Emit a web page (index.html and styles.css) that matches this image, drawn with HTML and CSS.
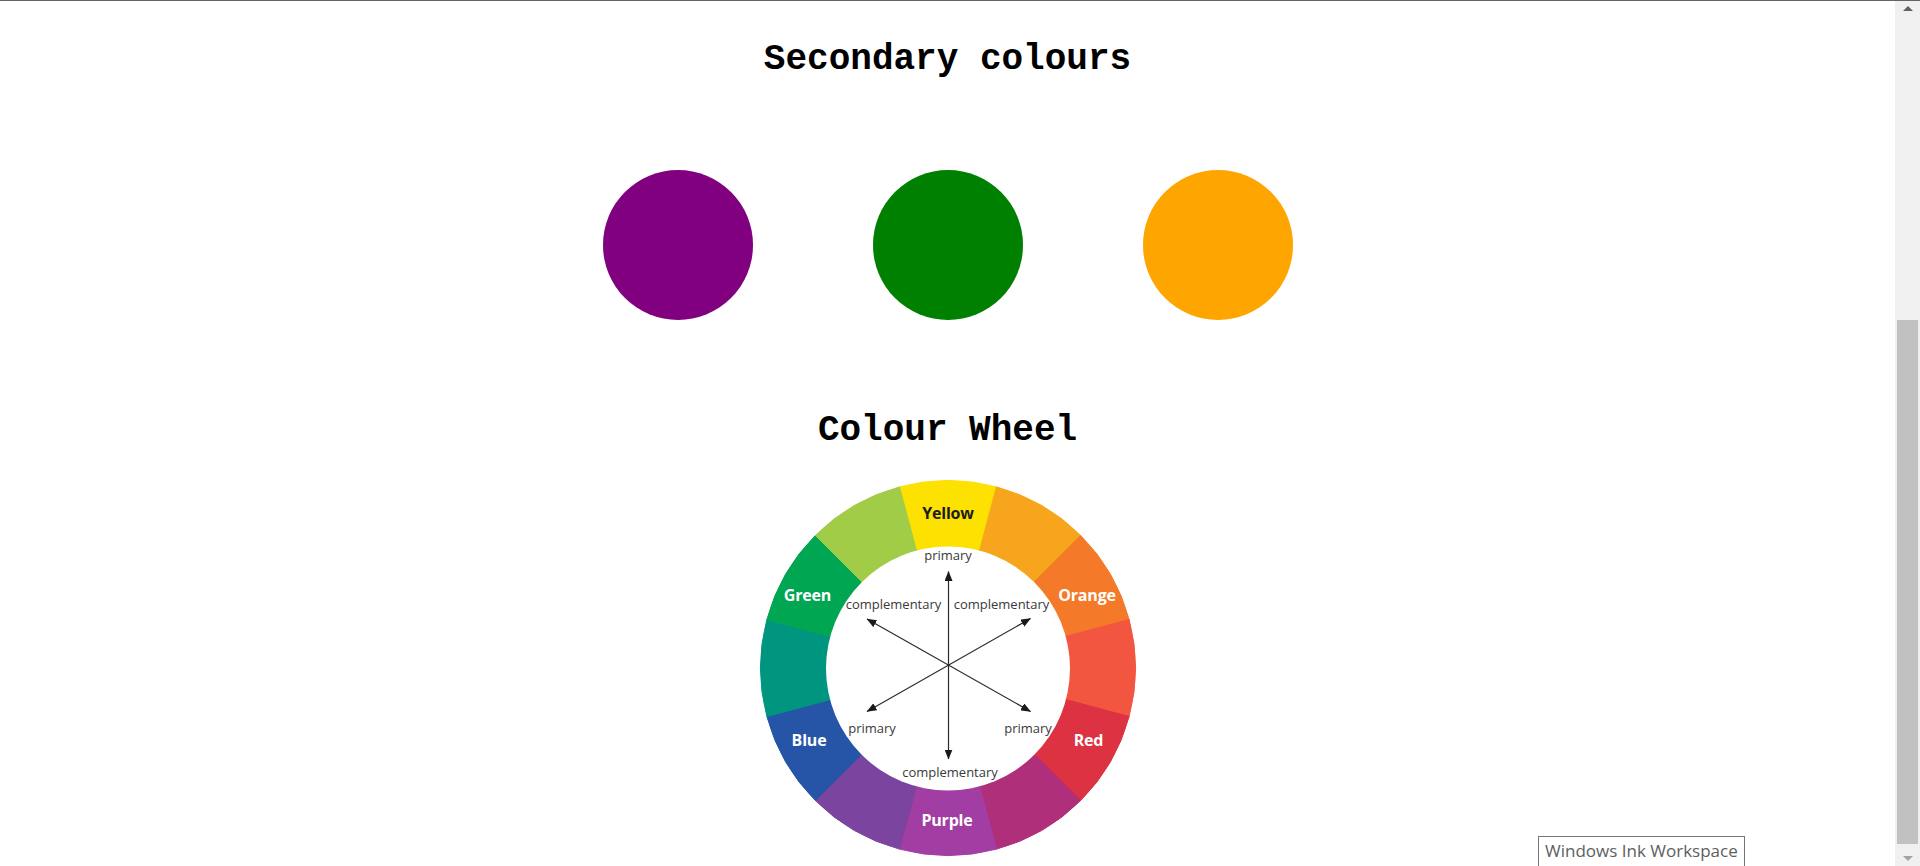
FILE: index.html
```html
<!DOCTYPE html>
<html lang="en">
<head>
<meta charset="utf-8">
<title>Colours</title>
<link rel="stylesheet" href="styles.css">
</head>
<body>
<div class="window">
  <main class="page">
    <h1 class="title">Secondary colours</h1>
    <div class="swatches">
      <div class="swatch purple"></div>
      <div class="swatch green"></div>
      <div class="swatch orange"></div>
    </div>
    <h2 class="title wheel-title">Colour Wheel</h2>
    <svg class="wheel" width="400" height="400" viewBox="0 0 400 400" xmlns="http://www.w3.org/2000/svg">
      <defs>
        <marker id="ah" viewBox="0 0 10 8" refX="9.5" refY="4" markerWidth="10" markerHeight="8" markerUnits="userSpaceOnUse" orient="auto-start-reverse">
          <path d="M0,0 L10,4 L0,8 z" fill="#1a1a1a"/>
        </marker>
      </defs>
      <g class="segments">
        <path fill="#fde100" stroke="#fde100" d="M200,200 L151.472,18.889 A187.5,187.5 0 0 1 248.528,18.889 Z"/>
        <path fill="#f7a51d" stroke="#f7a51d" d="M200,200 L248.528,18.889 A187.5,187.5 0 0 1 332.583,67.417 Z"/>
        <path fill="#f47a2a" stroke="#f47a2a" d="M200,200 L332.583,67.417 A187.5,187.5 0 0 1 381.111,151.472 Z"/>
        <path fill="#f25540" stroke="#f25540" d="M200,200 L381.111,151.472 A187.5,187.5 0 0 1 381.111,248.528 Z"/>
        <path fill="#dc3242" stroke="#dc3242" d="M200,200 L381.111,248.528 A187.5,187.5 0 0 1 332.583,332.583 Z"/>
        <path fill="#b02f7a" stroke="#b02f7a" d="M200,200 L332.583,332.583 A187.5,187.5 0 0 1 248.528,381.111 Z"/>
        <path fill="#a13da3" stroke="#a13da3" d="M200,200 L248.528,381.111 A187.5,187.5 0 0 1 151.472,381.111 Z"/>
        <path fill="#7a449f" stroke="#7a449f" d="M200,200 L151.472,381.111 A187.5,187.5 0 0 1 67.417,332.583 Z"/>
        <path fill="#2655a8" stroke="#2655a8" d="M200,200 L67.417,332.583 A187.5,187.5 0 0 1 18.889,248.528 Z"/>
        <path fill="#00957f" stroke="#00957f" d="M200,200 L18.889,248.528 A187.5,187.5 0 0 1 18.889,151.472 Z"/>
        <path fill="#00a652" stroke="#00a652" d="M200,200 L18.889,151.472 A187.5,187.5 0 0 1 67.417,67.417 Z"/>
        <path fill="#a1cc48" stroke="#a1cc48" d="M200,200 L67.417,67.417 A187.5,187.5 0 0 1 151.472,18.889 Z"/>
      </g>
      <circle cx="200" cy="200.5" r="122" fill="#ffffff"/>
      <g class="arrows" stroke="#2a2a2a" stroke-width="1.2" marker-start="url(#ah)" marker-end="url(#ah)">
        <line x1="200.5" y1="103.5" x2="200.5" y2="291"/>
        <line x1="119" y1="151" x2="282.5" y2="243.5"/>
        <line x1="282.5" y1="150.5" x2="119" y2="243.5"/>
      </g>
      <g class="labels">
        <text class="label dark" x="200" y="51">Yellow</text>
        <text class="label" x="59.5" y="133">Green</text>
        <text class="label" x="339" y="133">Orange</text>
        <text class="label" x="61" y="277.5">Blue</text>
        <text class="label" x="340.5" y="277.5">Red</text>
        <text class="label" x="199" y="357.5">Purple</text>
      </g>
      <g class="notes">
        <text class="note" x="200" y="92">primary</text>
        <text class="note" x="145.5" y="140.5">complementary</text>
        <text class="note" x="253.5" y="140.5">complementary</text>
        <text class="note" x="124" y="265">primary</text>
        <text class="note" x="280" y="265">primary</text>
        <text class="note" x="202" y="309">complementary</text>
      </g>
    </svg>
  </main>
  <aside class="scrollbar">
    <div class="sb-btn"><span class="tri up"></span></div>
    <div class="sb-track"><div class="sb-thumb"></div></div>
    <div class="sb-btn"><span class="tri down"></span></div>
  </aside>
</div>
<div class="tooltip">Windows Ink Workspace</div>
</body>
</html>
```
FILE: styles.css
```css
html, body {
  margin: 0;
  padding: 0;
  height: 100%;
  overflow: hidden;
  background: #ffffff;
}

.window {
  display: flex;
  height: 100vh;
  box-sizing: border-box;
  border-top: 1px solid #646464;
}

.page {
  flex: 1;
  display: flex;
  flex-direction: column;
  align-items: center;
  padding-top: 39px;
  min-width: 0;
}

.title {
  margin: 0;
  font-family: "Liberation Mono", "Courier New", monospace;
  font-weight: bold;
  font-size: 36px;
  line-height: 40px;
  color: #000;
}

.swatches {
  display: flex;
  gap: 120px;
  margin-top: 90px;
}

.swatch {
  width: 150px;
  height: 150px;
  border-radius: 50%;
}

.swatch.purple { background: #800080; }
.swatch.green { background: #008000; }
.swatch.orange { background: #ffa500; }

.wheel-title {
  margin-top: 91px;
}

.wheel {
  display: block;
  margin-top: 17px;
  flex: none;
}

.label {
  font-family: "Open Sans", "Noto Sans", sans-serif;
  font-weight: bold;
  font-size: 16px;
  fill: #ffffff;
  text-anchor: middle;
  letter-spacing: -0.2px;
}

.label.dark {
  fill: #1c1c1c;
}

.note {
  font-family: "Open Sans", "Noto Sans", sans-serif;
  font-size: 13px;
  fill: #3a3a3a;
  text-anchor: middle;
}

.scrollbar {
  width: 25px;
  flex: none;
  background: #f0f0f0;
  display: flex;
  flex-direction: column;
}

.sb-btn {
  height: 17px;
  display: flex;
  align-items: center;
  justify-content: center;
  flex: none;
}

.tri {
  width: 0;
  height: 0;
  border-left: 5px solid transparent;
  border-right: 5px solid transparent;
}

.tri.up {
  border-bottom: 5px solid #606060;
  margin-top: -2px;
}

.tri.down {
  border-top: 5px solid #a3a3a3;
  margin-top: 2px;
}

.sb-track {
  flex: 1;
  display: flex;
  flex-direction: column;
  justify-content: flex-end;
  padding: 0 2px 5px;
}

.sb-thumb {
  height: 524px;
  background: #c1c1c1;
}

.tooltip {
  position: fixed;
  left: 1538px;
  top: 836px;
  width: 207px;
  height: 36px;
  box-sizing: border-box;
  border: 1px solid #767676;
  background: #ffffff;
  padding: 2px 0 0 6px;
  font-family: "Open Sans", "Noto Sans", sans-serif;
  font-size: 17px;
  color: #5e5e5e;
  white-space: nowrap;
}
```
